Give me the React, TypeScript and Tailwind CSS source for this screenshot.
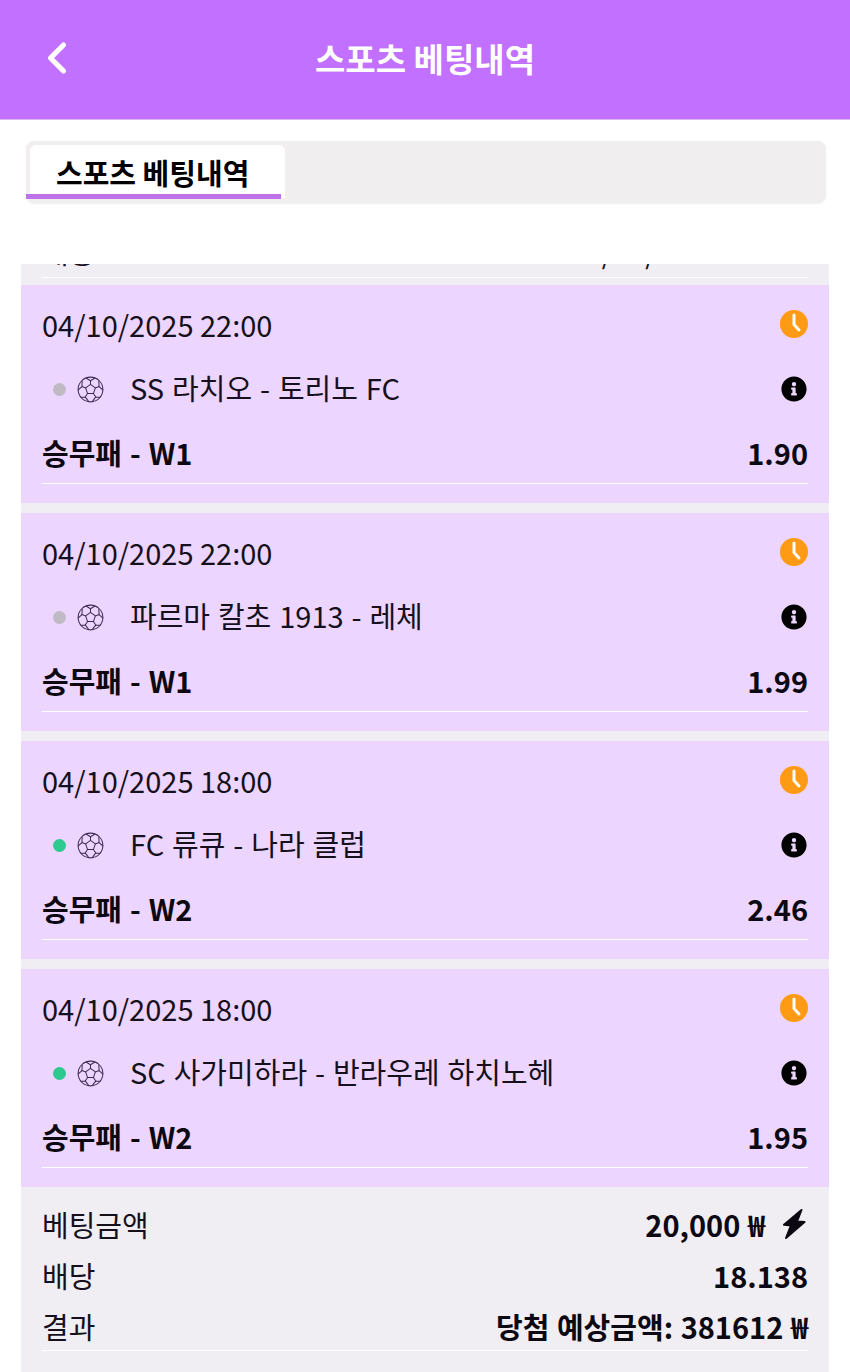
import { ChevronLeft } from "lucide-react";
import { FaInfoCircle } from "react-icons/fa";

const bets = [
  { time: "04/10/2025 22:00", live: false, match: "SS 라치오 - 토리노 FC", pick: "승무패 - W1", odds: "1.90" },
  { time: "04/10/2025 22:00", live: false, match: "파르마 칼초 1913 - 레체", pick: "승무패 - W1", odds: "1.99" },
  { time: "04/10/2025 18:00", live: true, match: "FC 류큐 - 나라 클럽", pick: "승무패 - W2", odds: "2.46" },
  { time: "04/10/2025 18:00", live: true, match: "SC 사가미하라 - 반라우레 하치노헤", pick: "승무패 - W2", odds: "1.95" },
];

function ClockIcon() {
  return (
    <svg viewBox="0 0 28 28" className="w-[28px] h-[28px] -mt-[5px]">
      <circle cx="14" cy="14" r="14" fill="#ff9a14" />
      <path d="M14 5V14.5L19 20" fill="none" stroke="#fff" strokeWidth="3" strokeLinecap="round" strokeLinejoin="round" />
    </svg>
  );
}

function BallIcon() {
  return (
    <svg viewBox="0 0 24 24" className="w-[27px] h-[27px] ml-[11px]" fill="none" stroke="#3d2a55" strokeWidth="0.9" strokeLinejoin="round" strokeLinecap="round">
      <circle cx="12" cy="12" r="11" />
      <path d="M12 7.5L16.3 10.6L14.6 15.6H9.4L7.7 10.6Z" />
      <path d="M12 7.5V4.2M16.3 10.6L19.6 9.4M14.6 15.6L16.7 18.6M9.4 15.6L7.3 18.6M7.7 10.6L4.4 9.4" />
      <path d="M12 4.2L8 1.8M12 4.2L16 1.8M19.6 9.4L19.4 4.6M19.6 9.4L22.9 12.4M16.7 18.6L20.4 18.8M16.7 18.6L13.6 22.8M7.3 18.6L3.6 18.8M7.3 18.6L10.4 22.8M4.4 9.4L4.6 4.6M4.4 9.4L1.1 12.4" />
    </svg>
  );
}

function BoltIcon() {
  return (
    <svg viewBox="0 0 24 30" className="w-[24px] h-[30px] ml-[17px] mr-[2px] -mt-[2px]" fill="currentColor">
      <path d="M19.5 1L2 15.8L9 16.4L4 29L22.5 13L15 12.4Z" stroke="currentColor" strokeWidth="2" strokeLinejoin="round" />
    </svg>
  );
}

function BetCard({ bet }: { bet: (typeof bets)[number] }) {
  return (
    <div className="h-[218px] bg-[#ecd5fe] px-[21px] flex flex-col text-[#16101c]">
      <div className="flex items-center justify-between h-[40px] mt-[21px]">
        <span className="text-[29px] leading-none -mt-[4px]">{bet.time}</span>
        <ClockIcon />
      </div>
      <div className="flex items-center h-[40px] mt-[23px]">
        <span className={`w-[13px] h-[13px] rounded-full ml-[11px] ${bet.live ? "bg-[#2dc98f]" : "bg-[#bfbac3]"}`} />
        <BallIcon />
        <span className="text-[29px] leading-none ml-[26px] flex-1 -mt-[4px] [word-spacing:1.4px]">{bet.match}</span>
        <FaInfoCircle className="text-black w-[26px] h-[26px] mr-[1px]" />
      </div>
      <div className="flex items-center justify-between h-[40px] mt-[25px] font-bold text-[29px] leading-none text-[#0d0912]">
        <span className="-mt-[4px] [word-spacing:1.4px]">{bet.pick}</span>
        <span className="-mt-[4px]">{bet.odds}</span>
      </div>
      <div className="h-px bg-white mt-[9px]" />
    </div>
  );
}

function SummaryRow({ label, children }: { label: string; children: React.ReactNode }) {
  return (
    <div className="flex items-center justify-between h-[51px] text-[29px] leading-none text-[#16101c]">
      <span>{label}</span>
      <span className="flex items-center font-bold text-[#0d0912] [word-spacing:1px]">{children}</span>
    </div>
  );
}

export default function App() {
  return (
    <div className="w-[850px] h-[1372px] overflow-hidden bg-white font-['Noto_Sans_CJK_KR','Noto_Sans',sans-serif]">
      <header className="h-[120px] bg-[#c170ff] border-b border-[#d9b5f5] flex items-center">
        <ChevronLeft className="text-white w-[52px] h-[52px] ml-[31px] -mt-[4px]" strokeWidth={2.4} />
        <h1 className="flex-1 text-center text-white font-bold text-[33px] leading-none -ml-[83px] -mt-[3px]">스포츠 베팅내역</h1>
      </header>

      <div className="mt-[21px] ml-[26px] w-[800px] h-[62px] bg-[#f0eeee] rounded-lg shadow-[0_1px_2px_rgba(0,0,0,0.06)] pt-[4px]">
        <div className="ml-[4px] w-[255px] h-[53px] bg-white rounded-t-md">
          <div className="h-[49px] flex items-center pl-[26px] pt-[5px] text-[29px] font-bold leading-none text-black">스포츠 베팅내역</div>
          <div className="h-[5px] w-[255px] -ml-[4px] bg-[#bd72ea]" />
        </div>
      </div>

      <div className="mt-[61px] mx-[21px] bg-[#f0eef3]">
        <div className="h-[21px] px-[21px]">
          <div className="h-[13px] overflow-hidden">
            <div className="flex justify-between text-[29px] leading-none text-[#16101c] -mt-[27px] pr-[8px]">
              <span>내용 : 0000 0000 0000</span>
              <span>04/10/2025 22:00</span>
            </div>
          </div>
          <div className="h-px bg-white" />
        </div>

        <div className="flex flex-col gap-[10px]">
          {bets.map((bet, i) => (
            <BetCard key={i} bet={bet} />
          ))}
        </div>

        <div className="h-[185px] px-[21px] pt-[12px]">
          <SummaryRow label="베팅금액">
            20,000 ₩
            <BoltIcon />
          </SummaryRow>
          <SummaryRow label="배당">18.138</SummaryRow>
          <SummaryRow label="결과">당첨 예상금액: 381612 ₩</SummaryRow>
          <div className="h-px bg-white -mt-[2px]" />
        </div>
      </div>
    </div>
  );
}
